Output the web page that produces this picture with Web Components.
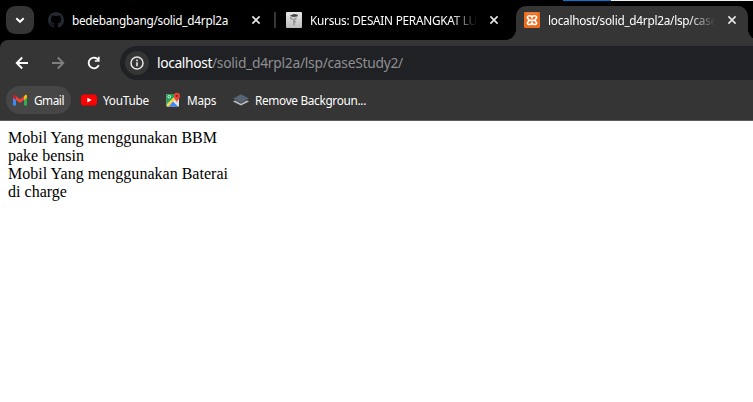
<!DOCTYPE html>
<html lang="id">
<head>
<meta charset="utf-8">
<title>localhost/solid_d4rpl2a/lsp/caseStudy2/</title>
<style>
html,body{margin:0;width:753px;height:402px;overflow:hidden;background:#fff}
</style>
</head>
<body>
<browser-window></browser-window>
<script>
const define = (name, html, ready) => customElements.define(name, class extends HTMLElement {
  connectedCallback() {
    if (this.shadowRoot) return;
    this.attachShadow({mode: 'open'}).innerHTML = html;
    if (ready) ready(this, this.shadowRoot);
  }
});

// Single-line label whose tracking is tuned to a given width.
define('ui-label', `<style>
:host{display:block;flex:none;white-space:pre;overflow:visible}
span{display:inline-block}
</style><span></span>`, (el, root) => {
  const s = root.querySelector('span');
  s.textContent = el.getAttribute('text');
  const w = parseFloat(el.getAttribute('width'));
  el.style.width = w + 'px';
  const natural = s.getBoundingClientRect().width;
  s.style.letterSpacing = ((w - natural) / s.textContent.length).toFixed(4) + 'px';
});

const icons = {
  chevron: [10, 10, '<path d="M1.3 3.2 5 6.8 8.7 3.2" fill="none" stroke="#fff" stroke-width="1.9"/>'],
  close: [10, 10, '<path d="M1.4 1.4 8.6 8.6M8.6 1.4 1.4 8.6" stroke="#e8e8e8" stroke-width="1.6"/>'],
  github: [16, 16, '<path fill="#24292f" d="M8 0C3.58 0 0 3.58 0 8c0 3.54 2.29 6.53 5.47 7.59.4.07.55-.17.55-.38v-1.49c-2.01.37-2.53-.49-2.69-.94-.09-.23-.48-.94-.82-1.13-.28-.15-.68-.52-.01-.53.63-.01 1.08.58 1.23.82.72 1.21 1.87.87 2.33.66.07-.52.28-.87.51-1.07-1.78-.2-3.64-.89-3.64-3.95 0-.87.31-1.59.82-2.15-.08-.2-.36-1.02.08-2.12 0 0 .67-.21 2.2.82a7.4 7.4 0 0 1 4 0c1.53-1.04 2.2-.82 2.2-.82.44 1.1.16 1.92.08 2.12.51.56.82 1.27.82 2.15 0 3.07-1.87 3.75-3.65 3.95.29.25.54.73.54 1.48v2.2c0 .21.15.46.55.38A8 8 0 0 0 16 8c0-4.42-3.58-8-8-8z"/>'],
  course: [16, 16, '<defs><linearGradient id="g" x2="0" y2="1"><stop stop-color="#e8e8e8"/><stop offset="1" stop-color="#bcbcbc"/></linearGradient></defs><rect width="16" height="16" rx="1" fill="url(#g)"/><path d="M4 3.6 8 2l4 .7-.7 1.9-4.5.5z" fill="#444"/><path d="M5 5.2 7.2 7l1.2-1.3 2.3-.5-.4 2.3-1.8 1.2-.7 1.5-.6-2L5 7.5z" fill="#a2a2a2"/><path d="M8 8v5.5M4.8 4.5v2.6M9.2 9.2v1.4" stroke="#666" stroke-width=".8"/>'],
  xampp: [16, 16, '<rect width="16" height="16" rx="1.2" fill="#ec6d20"/><path d="M2 1.2h12" stroke="#f5a16c" stroke-width=".6"/><path d="M8 6.6V5.4C8 3.2 3.4 3.2 3.4 5.4c0 1.3 1.6 1.6 1.6 2.9s-1.6 1.4-1.6 2.8C3.4 13 8 13 8 10.8V9.8M8 6.6V5.4c0-2.2 4.6-2.2 4.6 0 0 1.3-1.6 1.6-1.6 2.9s1.6 1.4 1.6 2.8C12.6 13 8 13 8 10.8V9.8M5.6 8.3h4.8" fill="none" stroke="#fff" stroke-width="1.7"/>'],
  back: [14, 14, '<path d="M13 7H2M7.2 1.5 1.7 7l5.5 5.5" fill="none" stroke="#fff" stroke-width="1.8"/>'],
  forward: [14, 14, '<path d="M1 7h11M6.8 1.5 12.3 7l-5.5 5.5" fill="none" stroke="#808080" stroke-width="1.8"/>'],
  reload: [14, 14, '<path d="M11.8 9.2A5.3 5.3 0 1 1 11.4 4.1" fill="none" stroke="#fff" stroke-width="1.8"/><path d="M12.6.8v5H7.8V4.2H11V.8z" fill="#fff"/>'],
  info: [14, 14, '<circle cx="7" cy="7" r="6" fill="none" stroke="#e6e6e6" stroke-width="1.5"/><path d="M7 6.3v4M7 3.6v1.6" stroke="#e6e6e6" stroke-width="1.6"/>'],
  gmail: [16, 16, '<path d="M1 5v8.5h3V7.2z" fill="#4285f4"/><path d="M15 5v8.5h-3V7.2z" fill="#34a853"/><path d="M12 4.2 13.2 3c.8-.6 1.8 0 1.8 1v1.7L12 8z" fill="#fbbc04"/><path d="M4 4.2 2.8 3C2 2.4 1 3 1 4v1.7L4 8z" fill="#c5221f"/><path d="M4 4.2 8 7.3l4-3.1V8l-4 3-4-3z" fill="#ea4335"/>'],
  youtube: [16, 16, '<rect y="2.5" width="16" height="11" rx="2.8" fill="#f00"/><path d="m6.3 5.8 4.5 2.3-4.5 2.3z" fill="#fff"/>'],
  maps: [16, 16, '<path d="M1.5 2H14v12.5H1.5z" fill="#e9e9e9"/><path d="M1.5 3Q1.5 2 2.5 2H11L8.7 7.4 1.5 14z" fill="#21a35a"/><path d="M1.5 12.2 8.5 5.5l2 2L4 14.5H2.5z" fill="#f8d64b"/><path d="m8 9.5 5.3 5H3.7z" fill="#4285f4"/><path d="m9.2 8.6 4.8 4.6V9z" fill="#ddd"/><circle cx="4.3" cy="4.7" r="1.3" fill="none" stroke="#fff" stroke-width=".8"/><path d="M11.8 10.5c-.4-2.5-3-3.3-3-6.7a3.1 3.1 0 0 1 6.2 0c0 3.4-2.8 4.2-3.2 6.7z" fill="#e84435"/><circle cx="11.9" cy="3.9" r="1.15" fill="#8d241d"/>'],
  layers: [16, 16, '<path d="M0 9.4 8 5l8 4.4-8 4.2z" fill="#b9bdc0"/><path d="M0 7.2 8 2.6l8 4.6-8 4.6z" fill="#353535"/><path d="M.2 6.6 8 2.3l7.8 4.3L8 10.9z" fill="#566473"/>']
};
define('ui-icon', '<style>:host{display:block;flex:none}svg{display:block}</style><div></div>', (el, root) => {
  const [w, h, art] = icons[el.getAttribute('name')];
  root.querySelector('div').innerHTML = `<svg width="${w}" height="${h}" viewBox="0 0 ${w} ${h}">${art}</svg>`;
});

define('browser-tab', `<style>
:host{display:flex;align-items:center;box-sizing:border-box;flex:none;height:34px;padding:0 9px 0 8px;color:#fff;font:11.8px/18px "Noto Sans","Open Sans",sans-serif;position:relative}
:host([active]){background:#353535;border-radius:10px 10px 0 0}
:host([active])::before,:host([active])::after{content:"";position:absolute;bottom:0;width:10px;height:10px}
:host([active])::before{left:-10px;background:radial-gradient(circle at 0 0,transparent 9.5px,#353535 10px)}
:host([active])::after{right:-10px;background:radial-gradient(circle at 100% 0,transparent 9.5px,#353535 10px)}
.title{margin-left:8px;flex:1;min-width:0;height:18px;margin-top:-6px}
:host([fade]) .title{-webkit-mask-image:linear-gradient(90deg,#000 calc(100% - 26px),transparent);mask-image:linear-gradient(90deg,#000 calc(100% - 26px),transparent)}
.close{margin-top:-6px;margin-left:12px}
</style><slot name="icon"></slot><div class="title"><slot></slot></div><ui-icon class="close" name="close"></ui-icon>`);

define('tab-strip', `<style>
:host{display:flex;box-sizing:border-box;height:40px;background:#000;padding-top:6px;position:relative;overflow:hidden}
.search{width:28px;height:28px;margin-left:6px;border-radius:9px;background:#353535;display:grid;place-items:center;flex:none}
ui-icon[slot]{margin-top:-6px}
.sep{width:2px;height:16px;background:#353535;margin-top:6px;flex:none}
.strip{position:absolute;top:0;left:563px;width:190px;height:1px;background:linear-gradient(90deg,#0078d7 48px,#e9f0ee 48px)}
</style>
<div class="search"><ui-icon name="chevron"></ui-icon></div>
<browser-tab style="width:230px;margin-left:6px"><ui-icon slot="icon" name="github"></ui-icon><ui-label text="bedebangbang/solid_d4rpl2a" width="156"></ui-label></browser-tab>
<div class="sep" style="margin-left:4px"></div>
<browser-tab fade style="width:232px;margin-left:2px;padding-right:11px"><ui-icon slot="icon" name="course"></ui-icon><ui-label text="Kursus: DESAIN PERANGKAT LU" width="167"></ui-label></browser-tab>
<browser-tab active fade style="width:232px;margin-left:6px;padding-right:11px"><ui-icon slot="icon" name="xampp"></ui-icon><ui-label text="localhost/solid_d4rpl2a/lsp/case" width="169"></ui-label></browser-tab>
<div class="strip"></div>`);

define('address-bar', `<style>
:host{display:flex;align-items:center;height:46px;padding-left:15px;color:#fff;font:13.8px/20px "Noto Sans","Open Sans",sans-serif}
.nav{display:flex;gap:22px;flex:none}
.box{display:flex;align-items:center;flex:1;height:34px;margin-left:19px;border-radius:17px 0 0 17px;background:#202124;padding-left:5px;box-sizing:border-box}
.info{width:24px;height:24px;border-radius:50%;background:#353535;display:grid;place-items:center;margin-right:8px}
ui-label{margin-top:-1px}
.path{color:#8e8f91}
</style>
<div class="nav"><ui-icon name="back"></ui-icon><ui-icon name="forward"></ui-icon><ui-icon name="reload"></ui-icon></div>
<div class="box"><div class="info"><ui-icon name="info"></ui-icon></div><ui-label text="localhost" width="55"></ui-label><ui-label class="path" text="/solid_d4rpl2a/lsp/caseStudy2/" width="191"></ui-label></div>`);

define('bookmark-item', `<style>
:host{display:flex;align-items:center;box-sizing:border-box;flex:none;height:28px;padding:0 7px 0 6px;border-radius:14px}
:host([hover]){background:#464646}
.label{display:block;margin-left:6px}
</style><slot name="icon"></slot><slot class="label"></slot>`);

define('bookmark-bar', `<style>
:host{display:flex;height:34px;padding-left:6px;color:#fff;font:11.8px/18px "Noto Sans","Open Sans",sans-serif}
</style>
<bookmark-item hover><ui-icon slot="icon" name="gmail"></ui-icon><ui-label text="Gmail" width="30"></ui-label></bookmark-item>
<bookmark-item style="margin-left:4px"><ui-icon slot="icon" name="youtube"></ui-icon><ui-label text="YouTube" width="46"></ui-label></bookmark-item>
<bookmark-item style="margin-left:3px"><ui-icon slot="icon" name="maps"></ui-icon><ui-label text="Maps" width="29"></ui-label></bookmark-item>
<bookmark-item style="margin-left:4px"><ui-icon slot="icon" name="layers"></ui-icon><ui-label text="Remove Backgroun..." width="111"></ui-label></bookmark-item>`);

define('page-content', `<style>
:host{display:block;padding:8px;color:#000;font:16px/18px "Liberation Serif","Times New Roman",serif}
</style><slot></slot>`);

define('browser-window', `<style>
:host{display:block;width:753px;height:402px;overflow:hidden;background:#fff}
.under{background:#000}
.chrome{background:#353535;border-radius:8px 0 0 0;height:81px;box-sizing:border-box;border-bottom:1px solid #5c5c5c}
</style>
<tab-strip></tab-strip>
<div class="under"><div class="chrome"><address-bar></address-bar><bookmark-bar></bookmark-bar></div></div>
<page-content>
<ui-label text="Mobil Yang menggunakan BBM" width="209"></ui-label>
<ui-label text="pake bensin" width="76"></ui-label>
<ui-label text="Mobil Yang menggunakan Baterai" width="220"></ui-label>
<ui-label text="di charge" width="59"></ui-label>
</page-content>`);
</script>
</body>
</html>
